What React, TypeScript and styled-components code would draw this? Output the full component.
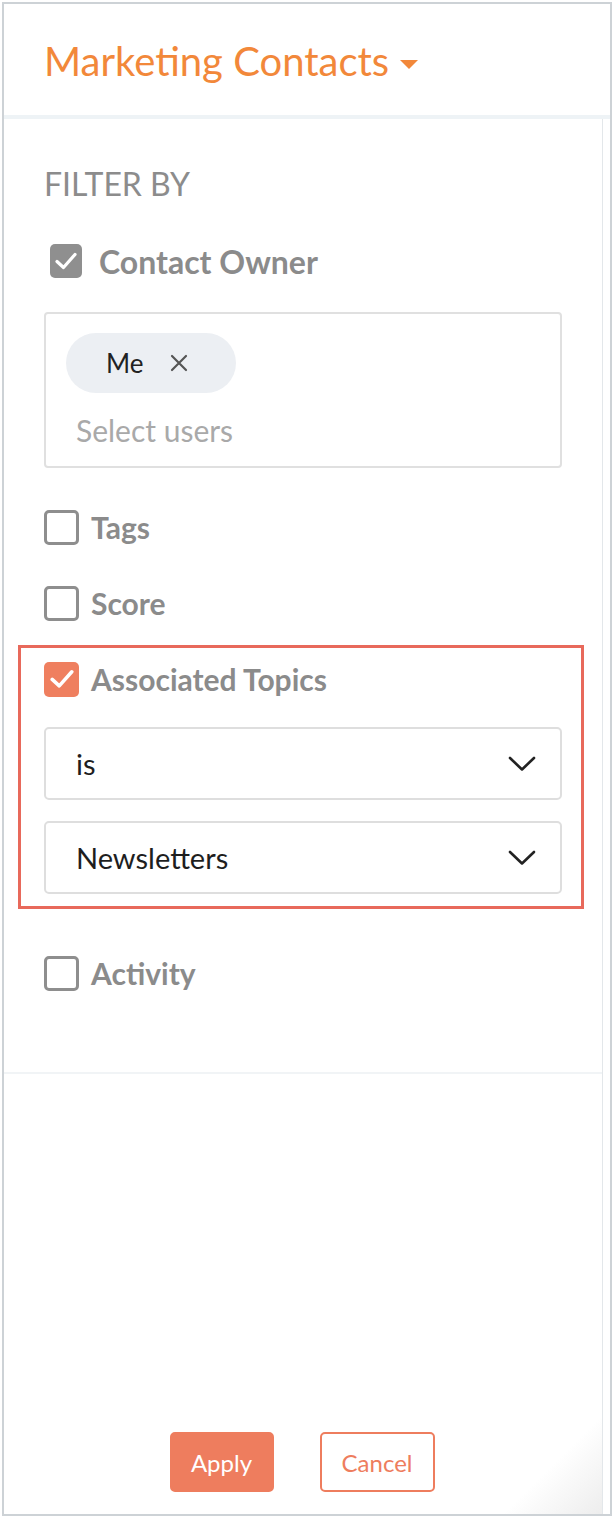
import styled, { createGlobalStyle } from 'styled-components';

const GlobalStyle = createGlobalStyle`
	html, body {
		margin: 0;
		padding: 0;
		background: #ffffff;
	}
	body {
		font-family: Lato, 'Open Sans', 'Liberation Sans', sans-serif;
	}
`;

const ORANGE = '#ee7d5e';

const Frame = styled.div`
	box-sizing: border-box;
	width: 610px;
	height: 1514px;
	margin: 2px 0 0 2px;
	border: 2px solid #cdd2d6;
	display: flex;
	flex-direction: column;
	background-color: #fff;
`;

const Header = styled.div`
	height: 111px;
	flex-shrink: 0;
	display: flex;
	align-items: center;
	padding-left: 40px;
	background: #fff;
`;

const Title = styled.div`
	font-size: 40px;
	color: #f2883a;
	display: flex;
	align-items: center;
	gap: 11px;
	margin-top: 2px;
`;

const Caret = styled.span`
	width: 0;
	height: 0;
	border-left: 9px solid transparent;
	border-right: 9px solid transparent;
	border-top: 9px solid #f2883a;
	margin-top: 8px;
`;

const HeaderRule = styled.div`
	height: 4px;
	flex-shrink: 0;
	background: #eef3f6;
`;

const Body = styled.div`
	flex: 1;
	display: flex;
	min-height: 0;
`;

const Main = styled.div`
	flex: 1;
	display: flex;
	flex-direction: column;
	background: linear-gradient(315deg, #ededed 0px, #ffffff 70px);
`;

const Track = styled.div`
	width: 7px;
	border-left: 1px solid #e3e7ea;
	background: #fff;
`;

const Filters = styled.div`
	height: 955px;
	box-sizing: border-box;
	padding: 47px 40px 0 40px;
	border-bottom: 2px solid #f1f4f6;
	display: flex;
	flex-direction: column;
	background: #fff;
`;

const FilterBy = styled.div`
	font-size: 32px;
	color: #8c8c8c;
	line-height: 36px;
`;

const Row = styled.label<{ $mt: number; $indent?: number }>`
	display: flex;
	align-items: center;
	gap: ${(p) => (p.$indent ? 17 : 12)}px;
	margin-top: ${(p) => p.$mt}px;
	padding-left: ${(p) => p.$indent ?? 0}px;
	height: 36px;
`;

const Box = styled.span<{ $state: 'off' | 'grey' | 'on' }>`
	box-sizing: border-box;
	width: ${(p) => (p.$state === 'grey' ? 32 : 35)}px;
	height: ${(p) => (p.$state === 'grey' ? 34 : 35)}px;
	border-radius: 5px;
	flex-shrink: 0;
	display: flex;
	align-items: center;
	justify-content: center;
	border: ${(p) => (p.$state === 'off' ? '3px solid #8e8e8e' : 'none')};
	background: ${(p) => (p.$state === 'grey' ? '#8f8f8f' : p.$state === 'on' ? '#ef7f5f' : '#fff')};
`;

const Label = styled.span<{ $size?: number }>`
	font-size: ${(p) => p.$size ?? 30}px;
	font-weight: 700;
	color: #8b8b8b;
`;

const UserBox = styled.div`
	margin-top: 33px;
	box-sizing: border-box;
	height: 156px;
	border: 2px solid #e0e0e0;
	border-radius: 4px;
	padding: 19px 0 0 20px;
	display: flex;
	flex-direction: column;
	align-items: flex-start;
`;

const Chip = styled.div`
	height: 60px;
	width: 170px;
	box-sizing: border-box;
	border-radius: 30px;
	background: #eceff3;
	display: flex;
	align-items: center;
	padding-left: 40px;
	gap: 27px;
	font-size: 26px;
	color: #222;
`;

const Placeholder = styled.div`
	margin: 19px 0 0 10px;
	font-size: 30px;
	color: #a9a9a9;
`;

const Highlight = styled.div`
	margin: 24px -22px 0 -26px;
	border: 3px solid #e8695b;
	padding: 13px 19px 12px 23px;
	display: flex;
	flex-direction: column;
`;

const Select = styled.div<{ $mt: number }>`
	margin-top: ${(p) => p.$mt}px;
	box-sizing: border-box;
	height: 73px;
	border: 2px solid #dedede;
	border-radius: 5px;
	display: flex;
	align-items: center;
	justify-content: space-between;
	padding: 0 24px 0 30px;
	font-size: 29px;
	color: #1e1e1e;
`;

const Footer = styled.div`
	flex: 1;
	display: flex;
	align-items: flex-end;
	justify-content: center;
	gap: 46px;
	padding: 0 0 22px 0;
	margin-left: -2px;
`;

const Button = styled.button<{ $primary?: boolean }>`
	box-sizing: border-box;
	height: 60px;
	border-radius: 5px;
	font-family: inherit;
	font-size: 24px;
	padding: 0;
	border: 2px solid ${ORANGE};
	background: ${(p) => (p.$primary ? ORANGE : '#fff')};
	color: ${(p) => (p.$primary ? '#fff' : ORANGE)};
	width: ${(p) => (p.$primary ? 104 : 115)}px;
`;

const Check = ({ size = 22 }: { size?: number }) => (
	<svg width={size} height={(size * 18) / 22} viewBox="0 0 22 18">
		<path d="M2 9.5 L8.5 15.5 L20 2.5" fill="none" stroke="#fff" strokeWidth="3.2" strokeLinecap="round" strokeLinejoin="round" />
	</svg>
);

const Chevron = () => (
	<svg width="28" height="16" viewBox="0 0 28 16">
		<path d="M2 2 L14 13.5 L26 2" fill="none" stroke="#222" strokeWidth="2.6" strokeLinecap="round" strokeLinejoin="round" />
	</svg>
);

const Cross = () => (
	<svg width="18" height="18" viewBox="0 0 18 18">
		<path d="M2 2 L16 16 M16 2 L2 16" stroke="#555" strokeWidth="2.2" strokeLinecap="round" />
	</svg>
);

export default function App() {
	return (
		<>
			<GlobalStyle />
			<Frame>
				<Header>
					<Title>
						Marketing Contacts
						<Caret />
					</Title>
				</Header>
				<HeaderRule />
				<Body>
					<Main>
						<Filters>
							<FilterBy>FILTER BY</FilterBy>
							<Row $mt={41} $indent={6}>
								<Box $state="grey">
									<Check />
								</Box>
								<Label $size={32}>Contact Owner</Label>
							</Row>
							<UserBox>
								<Chip>
									Me
									<Cross />
								</Chip>
								<Placeholder>Select users</Placeholder>
							</UserBox>
							<Row $mt={41}>
								<Box $state="off" />
								<Label>Tags</Label>
							</Row>
							<Row $mt={40}>
								<Box $state="off" />
								<Label>Score</Label>
							</Row>
							<Highlight>
								<Row $mt={0}>
									<Box $state="on">
										<Check size={24} />
									</Box>
									<Label>Associated Topics</Label>
								</Row>
								<Select $mt={30}>
									is
									<Chevron />
								</Select>
								<Select $mt={21}>
									Newsletters
									<Chevron />
								</Select>
							</Highlight>
							<Row $mt={46}>
								<Box $state="off" />
								<Label>Activity</Label>
							</Row>
						</Filters>
						<Footer>
							<Button $primary>Apply</Button>
							<Button>Cancel</Button>
						</Footer>
					</Main>
					<Track />
				</Body>
			</Frame>
		</>
	);
}
